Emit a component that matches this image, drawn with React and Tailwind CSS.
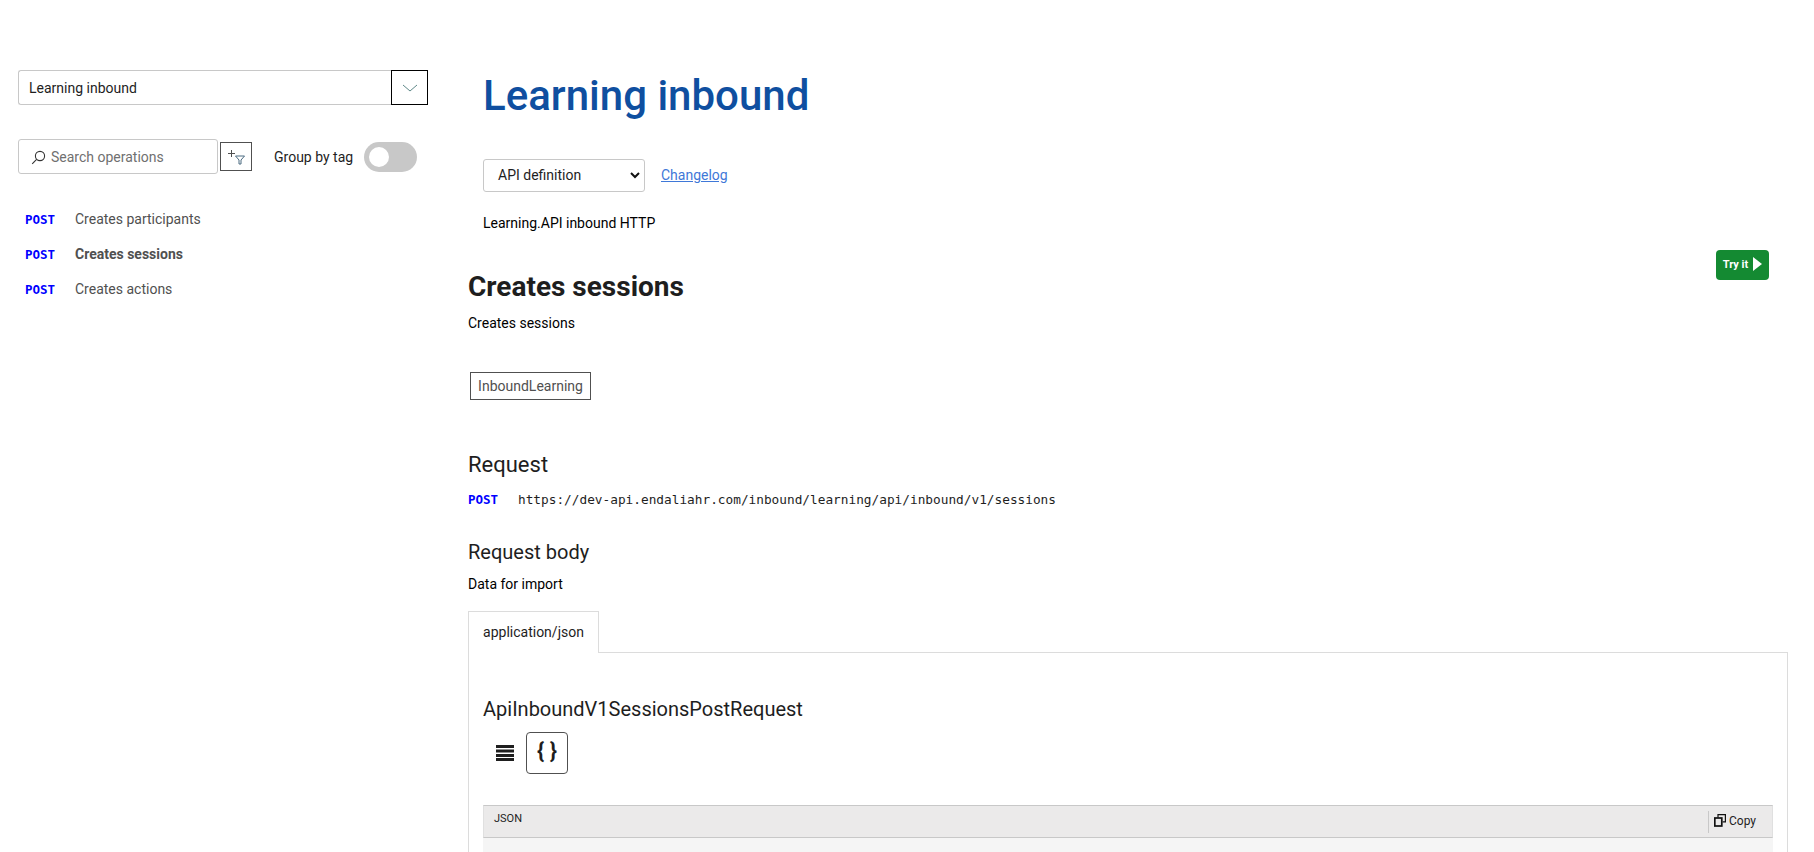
import React from "react";

function Post({ className = "" }) {
  return <span className={`font-['DejaVu_Sans_Mono',monospace] font-bold text-[12.5px] text-[#0000ff] ${className}`}>POST</span>;
}

function NavItem({ label, active }) {
  return (
    <div className="flex items-center h-[35px] pl-[7px] pt-[1px]">
      <Post className="w-[50px] pt-[2px]" />
      <span className={`text-[14px] text-[#505050] ${active ? "font-bold" : ""}`}>{label}</span>
    </div>
  );
}

export default function App() {
  return (
    <div className="flex h-[852px] w-[1814px] overflow-hidden bg-white font-['Roboto',sans-serif] text-[14px] text-black">
      <aside className="w-[465px] shrink-0 pl-[18px] pt-[70px]">
        <div className="flex h-[35px] w-[410px] items-stretch">
          <div className="flex flex-1 items-center rounded-l-[3px] border border-r-0 border-[#c8c8c8] pl-[10px] pt-[1px] text-[14px] text-[#1e1e1e]">Learning inbound</div>
          <div className="flex w-[37px] items-center justify-center border border-black">
            <svg width="16" height="8" viewBox="0 0 16 8" fill="none" stroke="#4c7a7a" strokeWidth="0.9"><path d="M1 1l7 6 7-6" /></svg>
          </div>
        </div>
        <div className="mt-[34px] flex items-center">
          <div className="flex h-[35px] w-[200px] items-center rounded-[3px] border border-[#c8c8c8] pl-[12px] pt-[1px] text-[14px] text-[#707070]">
            <svg width="15" height="15" viewBox="0 0 15 15" fill="none" stroke="#333" strokeWidth="1.1"><circle cx="9" cy="6" r="4.6" /><path d="M5.6 9.4L1.2 13.8" /></svg>
            <span className="ml-[5px]">Search operations</span>
          </div>
          <div className="ml-[2px] flex h-[29px] w-[32px] items-center justify-center border border-[#505050]">
            <svg width="18" height="16" viewBox="0 0 18 16" fill="none" stroke="#505050" strokeWidth="1"><path d="M1 4.5h7M4.5 1v7" /><path d="M8.5 7h9l-3.5 4v4h-2v-4z" stroke="#4a6a80" /></svg>
          </div>
          <span className="ml-[22px] pt-[1px] text-[14px] text-[#1e1e1e]">Group by tag</span>
          <div className="ml-[11px] flex h-[30px] w-[53px] items-center rounded-full bg-[#c8c8c8] pl-[5px]">
            <div className="h-[20px] w-[20px] rounded-full bg-white" />
          </div>
        </div>
        <div className="mt-[27px]">
          <NavItem label="Creates participants" />
          <NavItem label="Creates sessions" active />
          <NavItem label="Creates actions" />
        </div>
      </aside>

      <main className="relative min-w-0 flex-1 pt-[71px] pr-[26px] pl-[3px]">
        <div className="pl-[15px]">
          <h1 className="text-[42px] font-medium leading-[50px] text-[#0f4fa0]">Learning inbound</h1>
          <div className="mt-[38px] flex items-center">
            <div className="flex h-[33px] w-[162px] items-center rounded-[3px] border border-[#c8c8c8] pl-[14px] text-[14px] text-[#1e1e1e]">
              <span className="flex-1">API definition</span>
              <svg className="mr-[4px]" width="10" height="7" viewBox="0 0 10 7" fill="none" stroke="#111" strokeWidth="2"><path d="M1 1l4 4 4-4" /></svg>
            </div>
            <a className="ml-[16px] text-[14px] text-[#3f78d8] underline">Changelog</a>
          </div>
          <p className="mt-[21px] text-[14px] leading-[20px]">Learning.API inbound HTTP</p>
        </div>
        <button className="absolute left-[1251px] top-[250px] flex h-[30px] w-[53px] items-center justify-center gap-[5px] rounded-[4px] bg-[#148a32] text-[11px] font-bold text-white">
          Try it
          <svg className="-mt-[2px]" width="9" height="14" viewBox="0 0 9 14" fill="white"><path d="M0 0l9 7L0 14z" /></svg>
        </button>
        <h2 className="mt-[36px] text-[28px] font-bold leading-[36px] text-[#1e1e1e]">Creates sessions</h2>
        <p className="mt-[8px] text-[14px] leading-[20px]">Creates sessions</p>
        <div className="ml-[2px] mt-[39px] flex h-[28px] w-[121px] items-center justify-center border border-[#505050] text-[14px] text-[#505050]">InboundLearning</div>
        <h3 className="mt-[51px] text-[22px] font-normal leading-[28px] text-[#1e1e1e]">Request</h3>
        <div className="mt-[11px] flex items-center h-[20px]">
          <Post className="w-[50px]" />
          <span className="font-['DejaVu_Sans_Mono',monospace] text-[12.77px] text-[#1e1e1e]">https://dev-api.endaliahr.com/inbound/learning/api/inbound/v1/sessions</span>
        </div>
        <h4 className="mt-[28px] text-[20px] font-normal leading-[28px] text-[#1e1e1e]">Request body</h4>
        <p className="mt-[8px] text-[14px] leading-[20px]">Data for import</p>
        <div className="mt-[17px] flex h-[42px]">
          <div className="flex w-[131px] items-center justify-center border border-b-0 border-[#dcdcdc] text-[14px] text-[#1e1e1e]">application/json</div>
          <div className="flex-1 border-b border-[#dcdcdc]" />
        </div>
        <div className="h-[300px] border-x border-[#dcdcdc] px-[14px] pt-[42px]">
          <div className="text-[20px] leading-[28px] text-[#1e1e1e]">ApiInboundV1SessionsPostRequest</div>
          <div className="mt-[9px] flex items-center pl-[13px]">
            <svg width="18" height="16" viewBox="0 0 18 16" fill="#1e1e1e"><rect y="0" width="18" height="3" /><rect y="4.5" width="18" height="3" /><rect y="9" width="18" height="3" /><rect y="13" width="18" height="3" /></svg>
            <div className="ml-[12px] flex h-[42px] w-[42px] items-center justify-center gap-[1px] rounded-[4px] border border-[#505050] pb-[4px] font-['Roboto',sans-serif] text-[22px] font-bold leading-none text-[#1e1e1e]">{"{ }"}</div>
          </div>
          <div className="mt-[31px] flex h-[33px] items-center justify-between border-y border-[#c8c8c8] border-x border-x-[#e0e0e0] bg-[#ebeaea] pl-[10px] pr-[16px] text-[11px] text-[#1e1e1e]">
            <span className="-mt-[5px]">JSON</span>
            <div className="flex h-[22px] items-center border-l border-[#c8c8c8] pl-[5px]">
              <svg className="-mt-[2px]" width="12" height="13" viewBox="0 0 12 13" fill="none" stroke="#111" strokeWidth="1.2"><rect x="0.8" y="4" width="7" height="8" strokeWidth="1.7" /><path d="M4 3.6V0.6h7.4v7.2H8.6" /></svg>
              <span className="-mt-[1px] ml-[3px] text-[12px]">Copy</span>
            </div>
          </div>
          <div className="h-[60px] bg-[#f5f5f5]" />
        </div>
      </main>
    </div>
  );
}
